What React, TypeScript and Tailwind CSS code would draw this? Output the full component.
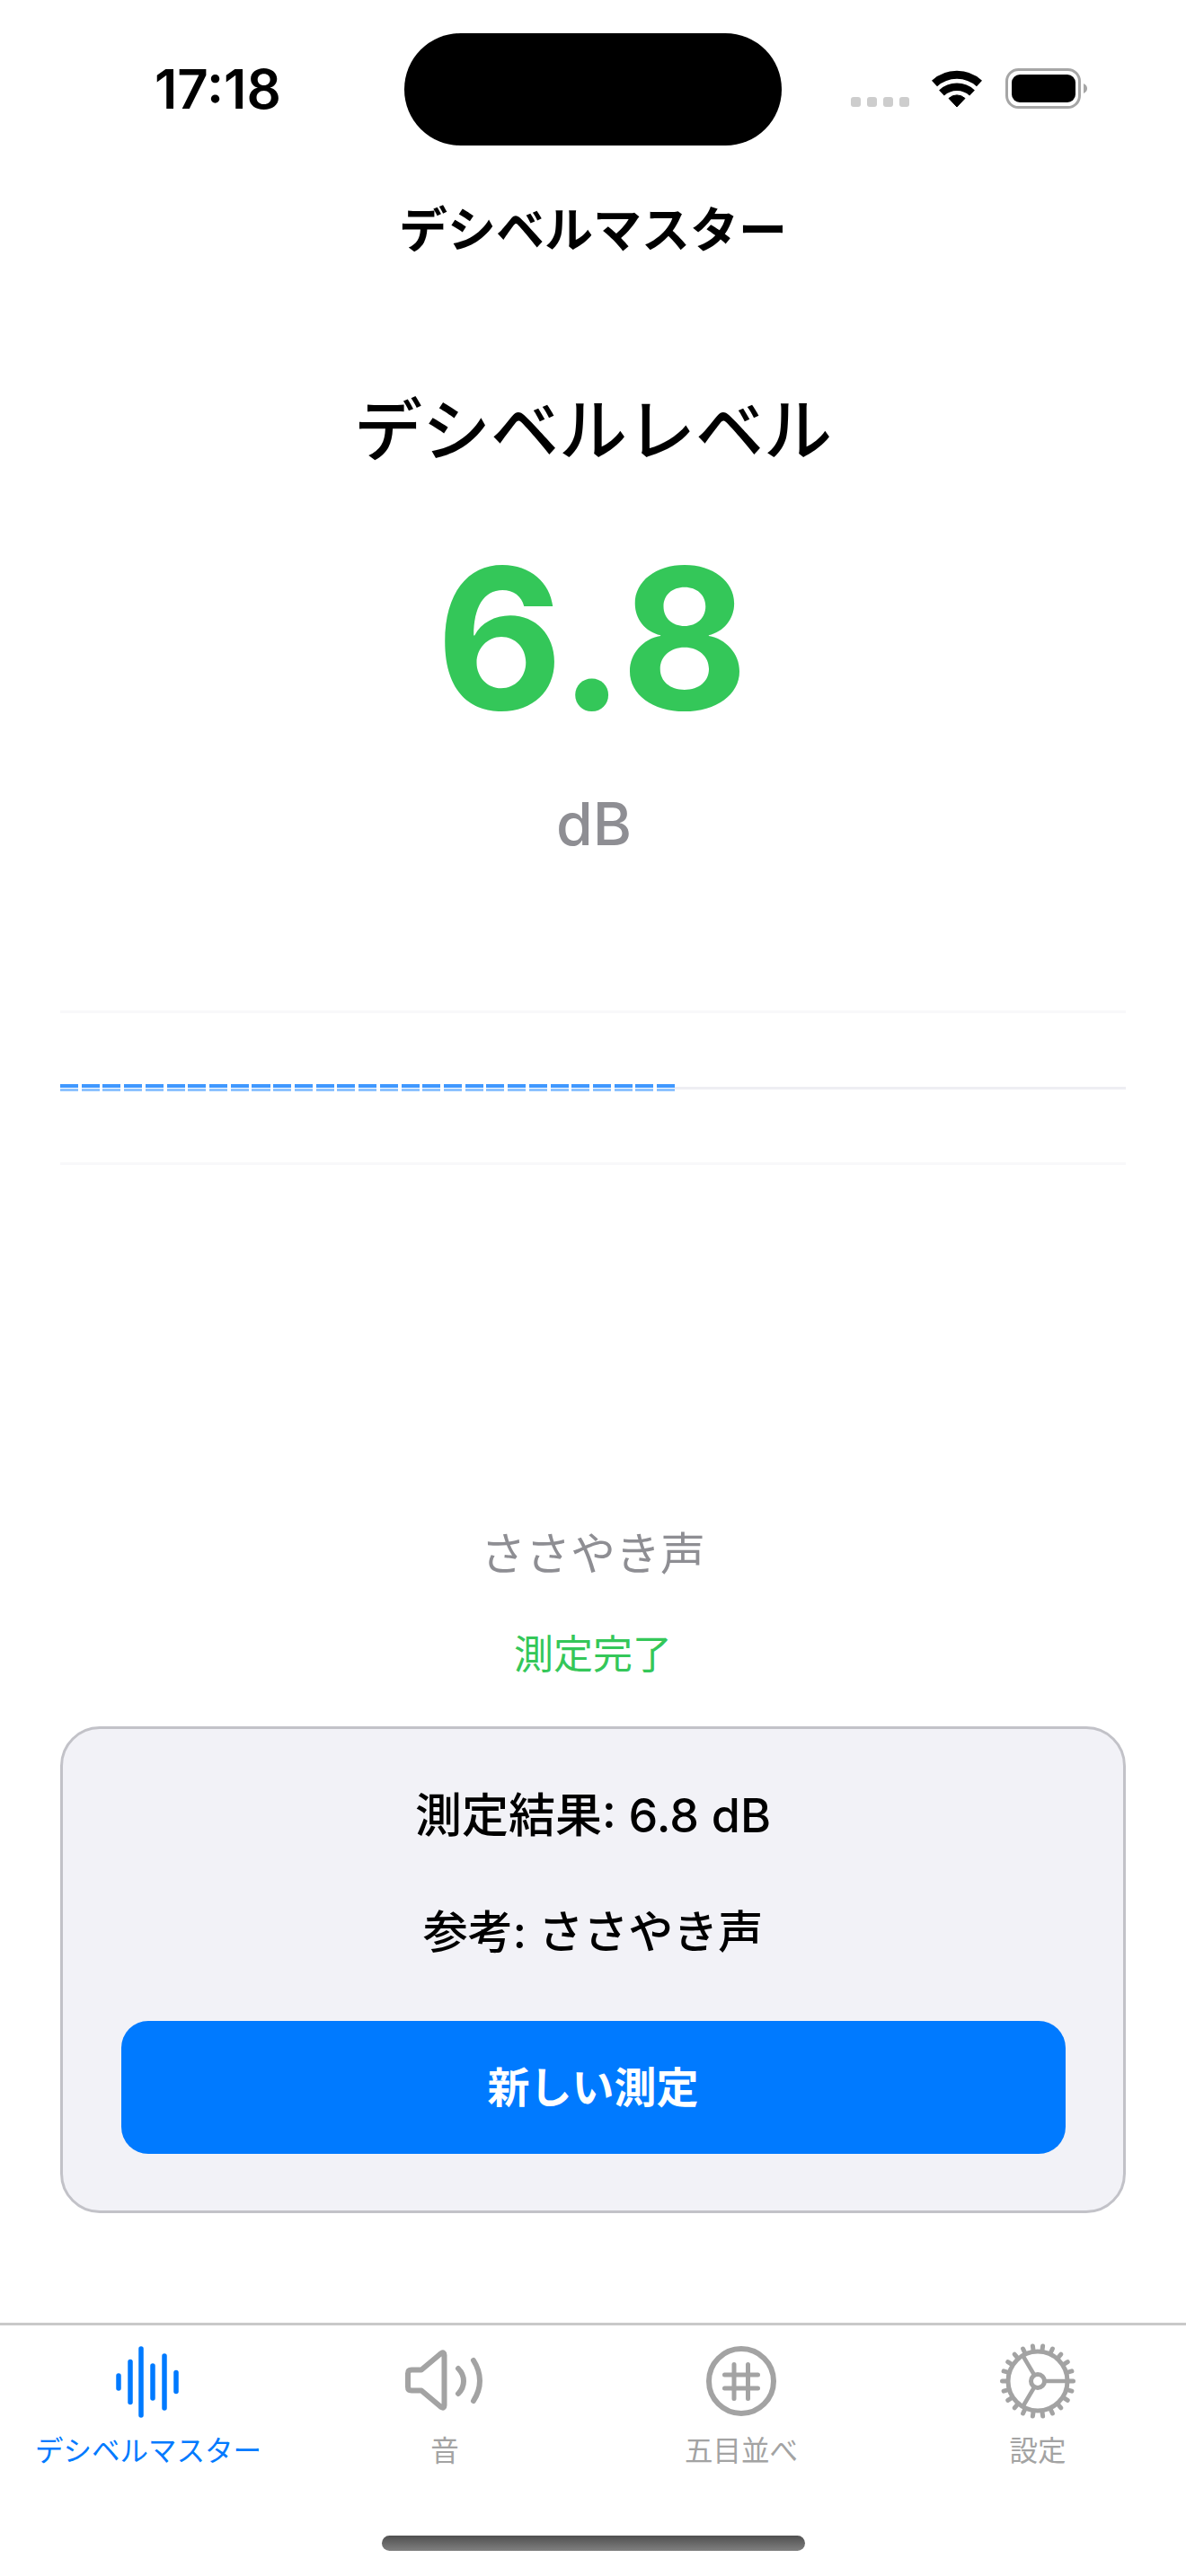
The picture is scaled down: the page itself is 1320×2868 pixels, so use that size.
const dashes = Array.from({ length: 29 }, (_, i) => i);
const wave = [
  { x: 9, h: 20 },
  { x: 22, h: 51 },
  { x: 34, h: 80 },
  { x: 47, h: 42 },
  { x: 60, h: 64 },
  { x: 73, h: 27 },
];
const teeth = Array.from({ length: 22 }, (_, i) => (i * 360) / 22);

function WifiIcon() {
  return (
    <svg width="56" height="44" viewBox="0 0 56 44" className="ml-[25px]">
      <path d="M3 17 A37 37 0 0 1 53 17" fill="none" stroke="#000" strokeWidth="9" />
      <path d="M11 27.5 A25 25 0 0 1 45 27.5" fill="none" stroke="#000" strokeWidth="8.5" />
      <path d="M28 43 L19 33.5 A13 13 0 0 1 37 33.5 Z" fill="#000" stroke="#000" strokeWidth="1" strokeLinejoin="round" />
    </svg>
  );
}

function BatteryIcon() {
  return (
    <svg width="92" height="46" viewBox="0 0 92 46" className="ml-[26px]">
      <rect x="1.5" y="1.5" width="81" height="42" rx="13" fill="none" stroke="#a6a6a6" strokeWidth="3" />
      <rect x="7" y="7" width="71" height="31" rx="9" fill="#000" />
      <path d="M87 17 C90 18.5 91 20.5 91 22.5 C91 24.5 90 26.5 87 28 Z" fill="#a6a6a6" />
    </svg>
  );
}

function WaveIcon() {
  return (
    <svg width="84" height="84" viewBox="0 0 84 84">
      {wave.map((b) => (
        <line key={b.x} x1={b.x} x2={b.x} y1={42 - b.h / 2 + 3} y2={42 + b.h / 2 - 3} stroke="#007aff" strokeWidth="5.5" strokeLinecap="round" />
      ))}
    </svg>
  );
}

function SpeakerIcon() {
  return (
    <svg width="92" height="84" viewBox="0 0 92 84" fill="none" stroke="#a3a3a3" strokeWidth="6" strokeLinecap="round" strokeLinejoin="round">
      <path d="M9 28.500 H20 L42 10 Q45.500 8 45.500 12 V68 Q45.500 72 42 70 L20 51.500 H9 Q5 51.500 5 47.500 V32.500 Q5 28.500 9 28.500 Z" />
      <path d="M61 27 Q67 33 67 41 Q67 49 61 55" />
      <path d="M78 18 Q85 29 85 40.500 Q85 52 78 63" />
    </svg>
  );
}

function GridIcon() {
  return (
    <svg width="84" height="84" viewBox="0 0 84 84" fill="none" stroke="#a3a3a3" strokeLinecap="round">
      <circle cx="42" cy="41" r="36" strokeWidth="6" />
      <path d="M34 22.500 V60.500 M49.500 22.500 V60.500 M23.500 34 H60.500 M23.500 49 H60.500" strokeWidth="5" />
    </svg>
  );
}

function GearIcon() {
  return (
    <svg width="84" height="84" viewBox="0 0 84 84" fill="none" stroke="#a3a3a3" className="overflow-visible">
      {teeth.map((a) => (
        <line key={a} x1="76" y1="41" x2="81.500" y2="41" strokeWidth="5" strokeLinecap="round" transform={`rotate(${a} 42 41)`} />
      ))}
      <circle cx="42" cy="41" r="33" strokeWidth="5" />
      <circle cx="42" cy="41" r="7.500" strokeWidth="5" />
      <path d="M50 41 H74 M38 34 L25 12 M38 48 L25 70" strokeWidth="4.500" />
    </svg>
  );
}

const tabs = [
  { label: "デシベルマスター", icon: WaveIcon, active: true },
  { label: "音", icon: SpeakerIcon, active: false },
  { label: "五目並べ", icon: GridIcon, active: false },
  { label: "設定", icon: GearIcon, active: false },
];

export default function App() {
  return (
    <div className="w-[1320px] h-[2868px] bg-white flex flex-col overflow-hidden text-black font-[Inter,'Noto_Sans_CJK_JP',sans-serif]">
      {/* status bar */}
      <div className="flex h-[162px] pt-[37px]">
        <div className="w-[450px] pl-[172px] pt-[27px] text-[60px] leading-[70px] font-semibold">17:18</div>
        <div className="w-[420px] h-[125px] bg-black rounded-full" />
        <div className="flex items-start pt-[39px] pl-[77px]">
          <div className="flex gap-[7px] mt-[32px]">
            <div className="w-[11px] h-[11px] rounded-[3px] bg-[#cdcdcd]" />
            <div className="w-[11px] h-[11px] rounded-[3px] bg-[#cdcdcd]" />
            <div className="w-[11px] h-[11px] rounded-[3px] bg-[#cdcdcd]" />
            <div className="w-[11px] h-[11px] rounded-[3px] bg-[#cdcdcd]" />
          </div>
          <WifiIcon />
          <BatteryIcon />
        </div>
      </div>

      <div className="h-[284px] flex justify-center pt-[59px] text-[54px] leading-[72px] font-semibold">デシベルマスター</div>

      <div className="flex flex-col items-center">
        <div className="h-[90px] flex items-center text-[76px] leading-[90px] font-medium mt-[-12px]">デシベルレベル</div>
        <div className="h-[304px] flex items-center text-[218px] leading-[304px] font-bold text-[#34c759] mt-[35px] tracking-[2px]">6.8</div>
        <div className="h-[76px] mt-[16px] ml-[2px] flex items-center text-[66px] leading-[76px] text-[#8e8e93] font-medium">dB</div>
      </div>

      {/* chart */}
      <div className="mx-[67px] mt-[170px] h-[172px] flex flex-col justify-between">
        <div className="h-[3px] bg-[#f8f8fa]" />
        <div className="flex items-center h-[8px]">
          <div className="flex w-[684px] gap-[3.7px] shrink-0">
            {dashes.map((d) => (
              <div key={d} className="flex-1 flex flex-col gap-[1px]">
                <div className="h-[3.500px] bg-[#3f98ff]" />
                <div className="h-[3px] bg-[#8cc2ff]" />
              </div>
            ))}
          </div>
          <div className="flex-1 h-[3px] bg-[#eeeef3]" />
        </div>
        <div className="h-[3px] bg-[#f8f8fa]" />
      </div>

      <div className="flex flex-col items-center mt-[397px]">
        <div className="h-[72px] flex items-center text-[50px] text-[#8e8e93]">ささやき声</div>
        <div className="h-[60px] mt-[46px] flex items-center text-[44px] text-[#34c759]">測定完了</div>
      </div>

      {/* result card */}
      <div className="mx-[67px] mt-[50px] h-[542px] rounded-[44px] border-[3px] border-[#c2c2c8] bg-[#f2f2f7] flex flex-col items-center">
        <div className="h-[70px] mt-[62px] flex items-center text-[52px] font-medium">測定結果: 6.8 dB</div>
        <div className="h-[70px] mt-[59px] flex items-center text-[50px] font-medium">参考: ささやき声</div>
        <div className="w-[1051px] h-[148px] mt-[64px] rounded-[30px] bg-[#007aff] text-white text-[47px] font-semibold flex items-center justify-center">新しい測定</div>
      </div>

      {/* tab bar */}
      <div className="mt-[122px] h-[3px] bg-[#c9c9c9]" />
      <div className="flex pt-[21px]">
        {tabs.map((t) => {
          const Icon = t.icon;
          return (
            <div key={t.label} className="w-[330px] flex flex-col items-center">
              <Icon />
              <div className={`text-[31.500px] leading-[44px] mt-[13px] ${t.active ? "text-[#007aff]" : "text-[#a3a3a3]"}`}>{t.label}</div>
            </div>
          );
        })}
      </div>
      <div className="mx-auto mt-[72px] w-[471px] h-[17px] rounded-full bg-gradient-to-b from-[#505050] to-[#808080]" />
    </div>
  );
}
